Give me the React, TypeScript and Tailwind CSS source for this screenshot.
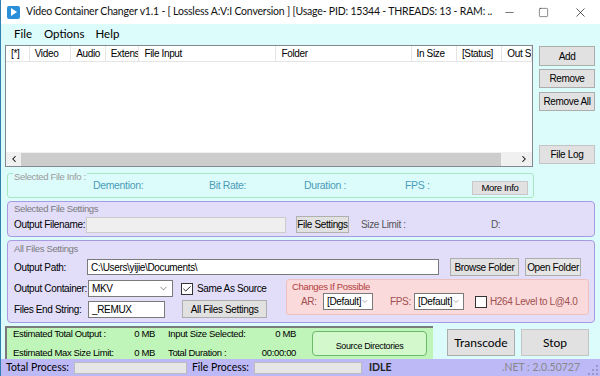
import { ChevronDown, ChevronLeft, ChevronRight, Minus, Square, X, Check } from 'lucide-react'

const body = { fontFamily: '"Liberation Sans", Arial, sans-serif' }
const ui = { fontFamily: 'Lato, "Noto Sans", sans-serif' }

const columns = [
  { name: '[*]', w: 24 },
  { name: 'Video', w: 42 },
  { name: 'Audio', w: 35 },
  { name: 'Extensi', w: 34 },
  { name: 'File Input', w: 139 },
  { name: 'Folder', w: 137 },
  { name: 'In Size', w: 46 },
  { name: '[Status]', w: 46 },
  { name: 'Out S', w: 30 },
]

const Btn = ({ children, className = '' }: { children: React.ReactNode; className?: string }) => (
  <div className={`flex items-center justify-center border border-[#adadad] bg-[#e1e1e1] text-black ${className}`}>
    {children}
  </div>
)

const Select = ({ value, w }: { value: string; w: string }) => (
  <div className={`flex h-[17px] items-center justify-between border border-[#7a7a7a] bg-white pl-[3px] pr-[3px] ${w}`}>
    <span>{value}</span>
    <ChevronDown size={11} strokeWidth={1.5} className="text-[#555]" />
  </div>
)

export default function App() {
  return (
    <div className="relative flex h-[376px] w-[600px] flex-col overflow-hidden whitespace-nowrap border-l border-[#2f7fb0] bg-[#dcfbfb] text-[10px] tracking-[-0.35px] text-black" style={body}>
      {/* title bar */}
      <div className="flex h-[24px] shrink-0 items-center bg-white tracking-[-0.2px]" style={ui}>
        <div className="ml-[6px] flex h-[13px] w-[13px] shrink-0 items-center justify-center rounded-[2px] bg-[#2b8fd9]">
          <div className="ml-[1px] h-0 w-0 border-y-[4px] border-l-[6px] border-y-transparent border-l-white" />
        </div>
        <span className="ml-[6px] overflow-hidden text-[10.5px] text-[#111]">
          Video Container Changer v1.1 - [ Lossless A:V:I Conversion ] [Usage- PID: 15344 - THREADS: 13 - RAM: ...
        </span>
        <div className="ml-auto flex h-full shrink-0 items-center">
          <div className="flex w-[34px] justify-center"><Minus size={13} strokeWidth={1} /></div>
          <div className="flex w-[34px] justify-center"><Square size={11} strokeWidth={1} /></div>
          <div className="flex w-[40px] justify-center"><X size={15} strokeWidth={1} /></div>
        </div>
      </div>

      {/* menu */}
      <div className="flex h-[20px] shrink-0 items-center text-[11.5px] tracking-normal" style={ui}>
        <span className="ml-[13px]">File</span>
        <span className="ml-[12px]">Options</span>
        <span className="ml-[11px]">Help</span>
      </div>

      {/* list + buttons */}
      <div className="mt-[1px] flex h-[122px] shrink-0 pl-[4px]">
        <div className="flex w-[528px] flex-col border border-[#828790] bg-white">
          <div className="flex h-[16px] shrink-0 border-b border-[#e5e5e5]">
            {columns.map((c) => (
              <div key={c.name} className="flex items-center overflow-hidden border-r border-[#e5e5e5] pl-[5px]" style={{ width: c.w }}>
                {c.name}
              </div>
            ))}
          </div>
          <div className="flex-1" />
          <div className="flex h-[14px] shrink-0 items-center bg-[#f0f0f0]">
            <ChevronLeft size={10} strokeWidth={2.5} className="ml-[2px] w-[12px]" />
            <div className="ml-[1px] h-[13px] w-[480px] bg-[#cdcdcd]" />
            <div className="flex-1" />
            <ChevronRight size={10} strokeWidth={2.5} className="mr-[3px]" />
          </div>
        </div>
        <div className="ml-[6px] flex w-[56px] flex-col">
          <Btn className="mt-[1px] h-[20px] border-[#0078d7]">Add</Btn>
          <Btn className="mt-[3px] h-[19px]">Remove</Btn>
          <Btn className="mt-[4px] h-[19px]">Remove All</Btn>
          <Btn className="mt-auto mb-[3px] h-[19px] border-[#c4c4c4] bg-[#cccccc] text-[#4d9a9a]">File Log</Btn>
        </div>
      </div>

      {/* selected file info */}
      <div className="relative ml-[6px] mt-[6px] h-[25px] w-[527px] shrink-0 rounded-[3px] border border-[#a8e8c0]">
        <span className="absolute left-[5px] top-[-3px] bg-[#dcfbfb] px-[1px] text-[9.5px] leading-[12px] text-[#9a9a9a]">Selected File Info :</span>
        <div className="flex h-full items-end pb-[3px] text-[10.5px] text-[#4a9bb8]">
          <span className="ml-[85px] w-[116px]">Demention:</span>
          <span className="w-[95px]">Bit Rate:</span>
          <span className="w-[101px]">Duration :</span>
          <span className="w-[67px]">FPS :</span>
          <Btn className="mb-[-1px] h-[14px] w-[56px] border-[#c8c8c8] bg-[#cccccc] text-[9.5px] text-[#9a9a9a]">More Info</Btn>
        </div>
      </div>

      {/* selected file settings */}
      <div className="ml-[6px] mt-[3px] flex h-[36px] w-[588px] shrink-0 flex-col rounded-[4px] border border-[#a79ae0] bg-[#e2defa] px-[6px]">
        <span className="text-[9.5px] leading-[13px] text-[#7a7a7a]">Selected File Settings</span>
        <div className="mt-[1px] flex items-center">
          <span className="w-[72px]">Output Filename:</span>
          <div className="h-[16px] w-[200px] border border-[#cccccc] bg-[#efefef]" />
          <Btn className="ml-[10px] h-[17px] w-[53px] border-[#b0b0b0] bg-[#d4d4d4]">File Settings</Btn>
          <span className="ml-[12px] w-[130px] text-[#555]">Size Limit :</span>
          <span className="text-[#555]">D:</span>
        </div>
      </div>

      {/* all files settings */}
      <div className="ml-[6px] mt-[3px] flex h-[83px] w-[588px] shrink-0 flex-col rounded-[4px] border border-[#a79ae0] bg-[#e2defa] pl-[6px]">
        <span className="mt-[1px] text-[9.5px] leading-[13px] text-[#7a7a7a]">All Files Settings</span>
        <div className="mt-[3px] flex items-center">
          <span className="w-[73px]">Output Path:</span>
          <div className="flex h-[16px] w-[352px] items-center border border-[#7a7a7a] bg-white pl-[3px]">C:\Users\yijie\Documents\</div>
          <Btn className="ml-[11px] h-[18px] w-[69px] bg-[#d4d4d4] text-[#1a1a8a]">Browse Folder</Btn>
          <Btn className="ml-[6px] h-[18px] w-[56px] bg-[#e6e6e6]">Open Folder</Btn>
        </div>
        <div className="flex">
          <div className="flex flex-col">
            <div className="mt-[4px] flex items-center">
              <span className="w-[74px]">Output Container:</span>
              <Select value="MKV" w="w-[85px]" />
              <div className="ml-[8px] flex h-[12px] w-[12px] items-center justify-center border border-[#333] bg-white">
                <Check size={10} strokeWidth={2} />
              </div>
              <span className="ml-[4px]">Same As Source</span>
            </div>
            <div className="mt-[3px] flex items-center">
              <span className="w-[74px]">Files End String:</span>
              <div className="flex h-[17px] w-[77px] items-center border border-[#7a7a7a] bg-white pl-[3px]">_REMUX</div>
              <Btn className="ml-[17px] h-[18px] w-[85px]">All Files Settings</Btn>
            </div>
          </div>
          <div className="ml-[19px] mt-[3px] flex h-[36px] w-[303px] flex-col rounded-[3px] border border-[#f0c0c0] bg-[#fadada] pl-[5px]">
            <span className="text-[9.5px] leading-[13px] text-[#b04040]">Changes If Possible</span>
            <div className="flex items-center">
              <span className="ml-[9px] w-[22px] text-[#a05050]">AR:</span>
              <Select value="[Default]" w="w-[50px]" />
              <span className="ml-[17px] w-[24px] text-[#a05050]">FPS:</span>
              <Select value="[Default]" w="w-[50px]" />
              <div className="ml-[11px] h-[12px] w-[12px] border border-[#333] bg-white" />
              <span className="ml-[3px] text-[#a05050]">H264 Level to L@4.0</span>
            </div>
          </div>
        </div>
      </div>

      {/* bottom */}
      <div className="mt-[3px] flex h-[33px] shrink-0 pl-[4px] text-[9.5px]">
        <div className="flex w-[428px] border-l-2 border-t-2 border-[#7a7a7a] bg-[#bff5b8]">
          <div className="flex w-[148px] flex-col justify-center gap-[5px] pl-[6px]">
            <div className="flex justify-between"><span>Estimated Total Output :</span><span>0 MB</span></div>
            <div className="flex justify-between"><span>Estimated Max Size Limit:</span><span>0 MB</span></div>
          </div>
          <div className="ml-[13px] flex w-[128px] flex-col justify-center gap-[5px]">
            <div className="flex justify-between"><span>Input Size Selected:</span><span>0 MB</span></div>
            <div className="flex justify-between"><span>Total Duration :</span><span>00:00:00</span></div>
          </div>
          <div className="ml-[16px] mt-[3px] flex h-[25px] w-[115px] items-end justify-center rounded-[4px] border border-[#6cb86c] bg-[#d2f8cc] pb-[2px] text-[9px]">
            Source Directories
          </div>
        </div>
        <Btn className="ml-[14px] mt-[3px] h-[27px] w-[68px] text-[12px] tracking-normal">
          <span style={ui}>Transcode</span>
        </Btn>
        <Btn className="ml-[6px] mt-[3px] h-[27px] w-[68px] border-[#c4c4c4] bg-[#cccccc] text-[12px] tracking-normal text-[#4d9a9a]">
          <span style={ui}>Stop</span>
        </Btn>
      </div>

      {/* status bar */}
      <div className="mt-auto flex h-[18px] shrink-0 items-center bg-[#bdb8f6] text-[10.5px] tracking-normal" style={ui}>
        <span className="ml-[5px]">Total Process:</span>
        <div className="ml-[5px] h-[12px] w-[113px] border border-[#bcbcbc] bg-[#e6e6e6]" />
        <span className="ml-[5px]">File Process:</span>
        <div className="ml-[5px] h-[12px] w-[108px] border border-[#bcbcbc] bg-[#e6e6e6]" />
        <span className="ml-[7px] font-bold text-[#222]">IDLE</span>
        <span className="ml-auto mr-[8px] text-[#888]">.NET :  2.0.50727</span>
        <svg width="10" height="10" viewBox="0 0 10 10" className="mr-[2px] mt-[4px]">
          <g fill="#9a96c8">
            <rect x="8" y="0" width="2" height="2" />
            <rect x="4" y="4" width="2" height="2" />
            <rect x="8" y="4" width="2" height="2" />
            <rect x="0" y="8" width="2" height="2" />
            <rect x="4" y="8" width="2" height="2" />
            <rect x="8" y="8" width="2" height="2" />
          </g>
        </svg>
      </div>
    </div>
  )
}
